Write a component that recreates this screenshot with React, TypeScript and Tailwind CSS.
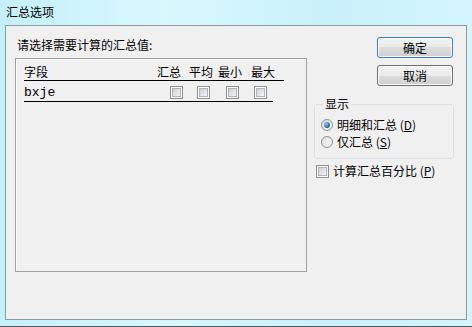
import React from 'react';

const cjk = { fontFamily: '"Noto Sans CJK SC", "Noto Sans", sans-serif' };

function CheckBox() {
  return (
    <div className="w-[13px] h-[13px] border border-[#8e8f8f] bg-white p-[1px] shrink-0">
      <div className="w-full h-full border border-[#aeb3b9] bg-[linear-gradient(135deg,#cbcfd5,#f6f6f6)]" />
    </div>
  );
}

function Radio({ checked }: { checked?: boolean }) {
  return (
    <div className="w-[12px] h-[12px] rounded-full border border-[#8e8f8f] bg-[linear-gradient(135deg,#d9dcdf,#fbfbfb)] flex items-center justify-center shrink-0">
      {checked && (
        <div className="w-[6px] h-[6px] rounded-full bg-[radial-gradient(circle_at_35%_35%,#8cd0f6,#1c5d96_70%)]" />
      )}
    </div>
  );
}

function WinButton({ label, isDefault }: { label: string; isDefault?: boolean }) {
  return (
    <button
      type="button"
      className={
        'w-[76px] h-[21px] rounded-[3px] border text-[12px] leading-[14px] text-black flex items-center justify-center shadow-[inset_0_0_0_1px_#fcfcfc] bg-[linear-gradient(#f2f2f2,#ebebeb_50%,#dddddd_50%,#cfcfcf)] ' +
        (isDefault ? 'border-[#3c7fb1] shadow-[inset_0_0_0_1px_#a8dcf2]' : 'border-[#707070]')
      }
    >
      {label}
    </button>
  );
}

export default function App() {
  const cols = [
    { label: '汇总', w: 'w-[32px]' },
    { label: '平均', w: 'w-[29px]' },
    { label: '最小', w: 'w-[33px]' },
    { label: '最大', w: 'w-[27px]' },
  ];

  return (
    <div
      className="w-[472px] h-[327px] flex flex-col border-b border-[#4f5d66] bg-[linear-gradient(90deg,#c4f0fb,#d9f7fd_35%,#c9f1fb_70%,#d4f5fd)] text-black overflow-hidden"
      style={cjk}
    >
      {/* title bar */}
      <div className="h-[25px] pl-[6px] pt-[4px] text-[12px] leading-[16px] shrink-0">汇总选项</div>

      {/* frame */}
      <div className="px-[5px] pb-[6px]">
        <div className="h-[295px] border border-[#8e9ba4] bg-[#f0f0f0] flex text-[12px]">
          {/* left column */}
          <div className="pl-[9px] pt-[11px]">
            <div className="leading-[16px] h-[16px] pl-[2px]">请选择需要计算的汇总值:</div>
            <div className="mt-[5px] w-[292px] h-[214px] border border-[#a0a0a0] shadow-[inset_1px_1px_0_#ffffff] px-[8px] pt-[5px]">
              <div className="w-[260px] h-[17px] border-b border-black flex leading-[16px]">
                <div className="w-[133px]">字段</div>
                {cols.map((c) => (
                  <div key={c.label} className={c.w}>
                    {c.label}
                  </div>
                ))}
              </div>
              <div className="w-[249px] h-[21px] border-b border-black flex items-start pt-[5px]">
                <div
                  className="w-[146px] text-[13px] leading-[14px]"
                  style={{ fontFamily: '"Liberation Mono", monospace' }}
                >
                  bxje
                </div>
                <CheckBox />
                <div className="ml-[14px]">
                  <CheckBox />
                </div>
                <div className="ml-[16px]">
                  <CheckBox />
                </div>
                <div className="ml-[15px]">
                  <CheckBox />
                </div>
              </div>
            </div>
          </div>

          {/* right column */}
          <div className="flex flex-col pt-[11px]">
            <div className="ml-[70px] flex flex-col gap-[7px]">
              <WinButton label="确定" isDefault />
              <WinButton label="取消" />
            </div>

            <fieldset className="mt-[11px] ml-[7px] w-[140px] border border-[#d5dfe5] rounded-[3px] pl-[6px] pb-[8px] pt-[5px]">
              <legend className="ml-[2px] px-[2px] leading-[14px]">显示</legend>
              <div className="h-[17px] flex items-center gap-[4px]">
                <Radio checked />
                <span>
                  明细和汇总 (<u>D</u>)
                </span>
              </div>
              <div className="h-[17px] flex items-center gap-[4px]">
                <Radio />
                <span>
                  仅汇总 (<u>S</u>)
                </span>
              </div>
            </fieldset>

            <div className="mt-[5px] ml-[9px] flex items-center gap-[4px]">
              <CheckBox />
              <span className="leading-[14px]">
                计算汇总百分比 (<u>P</u>)
              </span>
            </div>
          </div>
        </div>
      </div>
    </div>
  );
}
